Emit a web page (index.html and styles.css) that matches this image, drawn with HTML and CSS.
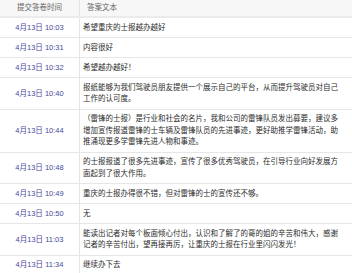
FILE: index.html
```html
<!DOCTYPE html>
<html lang="zh-CN">
<head>
<meta charset="utf-8">
<link rel="stylesheet" href="styles.css">
</head>
<body>
<table class="answers">
  <thead>
    <tr><th class="col-time">提交答卷时间</th><th class="col-text">答案文本</th></tr>
  </thead>
  <tbody>
    <tr><td class="time">4月13日 10:03</td><td class="text">希望重庆的士报越办越好</td></tr>
    <tr><td class="time">4月13日 10:31</td><td class="text">内容很好</td></tr>
    <tr><td class="time">4月13日 10:32</td><td class="text">希望越办越好！</td></tr>
    <tr><td class="time">4月13日 10:40</td><td class="text">报纸能够为我们驾驶员朋友提供一个展示自己的平台，从而提升驾驶员对自己工作的认可度。</td></tr>
    <tr><td class="time">4月13日 10:44</td><td class="text">（雷锋的士报）是行业和社会的名片，我和公司的雷锋队员发出募要，建议多增加宣传报道雷锋的士车辆及雷锋队员的先进事迹，更好助推学雷锋活动，助推涌现更多学雷锋先进人物和事迹。</td></tr>
    <tr><td class="time">4月13日 10:48</td><td class="text">的士报报道了很多先进事迹，宣传了很多优秀驾驶员，在引导行业向好发展方面起到了很大作用。</td></tr>
    <tr><td class="time">4月13日 10:49</td><td class="text">重庆的士报办得很不错，但对雷锋的士的宣传还不够。</td></tr>
    <tr><td class="time">4月13日 10:50</td><td class="text">无</td></tr>
    <tr><td class="time">4月13日 11:03</td><td class="text">能读出记者对每个板面倾心付出，认识和了解了的哥的姐的辛苦和伟大，感谢记者的辛苦付出，望再接再厉，让重庆的士报在行业里闪闪发光！</td></tr>
    <tr><td class="time">4月13日 11:34</td><td class="text">继续办下去</td></tr>
  </tbody>
</table>
</body>
</html>
```
FILE: styles.css
```css
html, body {
  margin: 0;
  padding: 0;
  background: #ffffff;
}
body {
  font-family: "Liberation Sans", "Noto Sans CJK SC", sans-serif;
  font-size: 7.5px;
  line-height: 11.5px;
  color: #333333;
}
.answers {
  width: 352px;
  border-collapse: collapse;
  table-layout: fixed;
}
.answers th {
  height: 16px;
  padding: 0;
  background: #f7f7f7;
  color: #666666;
  font-weight: normal;
  border-bottom: 2px solid #ebebeb;
  text-align: left;
}
.answers th.col-time {
  width: 79px;
  text-align: center;
  border-right: 1px solid #e4e4e4;
}
.answers th.col-text {
  padding-left: 7px;
}
.answers td {
  padding: 3.75px 0;
  border-bottom: 1px solid #e6e6e6;
  vertical-align: middle;
}
.answers td.time {
  text-align: center;
  color: #47479a;
  border-right: 1px solid #e4e4e4;
  white-space: nowrap;
}
.answers td.text {
  padding-left: 3px;
  padding-right: 7px;
  color: #2b2b2b;
}
```
